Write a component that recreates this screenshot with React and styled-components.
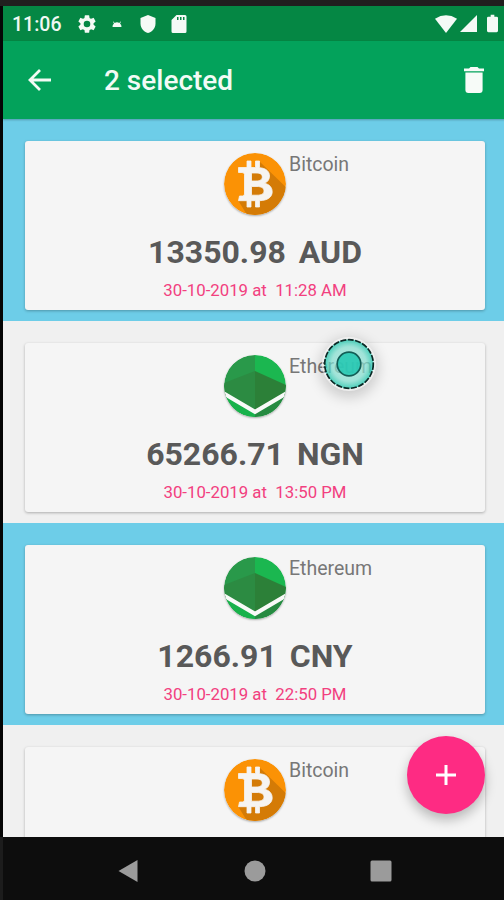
import React from "react";
import styled, { createGlobalStyle } from "styled-components";

const transactions = [
  { id: 1, coin: "Bitcoin", amount: "13350.98 AUD", date: "30-10-2019 at  11:28 AM", selected: true },
  { id: 2, coin: "Ethereum", amount: "65266.71 NGN", date: "30-10-2019 at  13:50 PM", selected: false },
  { id: 3, coin: "Ethereum", amount: "1266.91 CNY", date: "30-10-2019 at  22:50 PM", selected: true },
  { id: 4, coin: "Bitcoin", amount: "", date: "", selected: false },
];

function BitcoinLogo() {
  return (
    <Logo viewBox="0 0 62 62">
      <defs>
        <clipPath id="btcCircle">
          <circle cx="31" cy="31" r="31" />
        </clipPath>
      </defs>
      <circle cx="31" cy="31" r="31" fill="#fb9205" />
      <g clipPath="url(#btcCircle)">
        <path d="M36 9L70 42V70H28L14.500 48L23 44L25 18Z" fill="#d47b06" />
      </g>
      <path
        fill="#f6f4f1"
        fillRule="evenodd"
        stroke="#f6f4f1"
        strokeWidth="0.8"
        strokeLinejoin="round"
        d="M14.500 14.500H23V8H27V14.500H31.500V8H35.500V14.700C42 15.200 45.500 18.300 45.500 23C45.500 26.500 43.700 29 40.500 30.300C45.500 31.300 48.200 34.500 48.200 38.800C48.200 44.200 43.500 47.500 35.500 47.700V54H31.500V47.700H27V54H23V47.700H14.500L15.500 43H18.500Q20.500 43 20.500 41V21.500Q20.500 19.500 18 19.500H14.500ZM27.500 20V28H32C36 28 38.300 26.500 38.300 23.900C38.300 21.300 36.200 20 32 20ZM27.500 33.500V42.200H33C37.500 42.200 40 40.800 40 37.900C40 35 37.500 33.500 33 33.500Z"
      />
    </Logo>
  );
}

function EthereumLogo() {
  return (
    <Logo viewBox="0 0 62 62">
      <defs>
        <clipPath id="ethCircle">
          <circle cx="31" cy="31" r="31" />
        </clipPath>
      </defs>
      <g clipPath="url(#ethCircle)">
        <path d="M0 0H31V62H0Z" fill="#29994a" />
        <path d="M31 0H62V62H31Z" fill="#1bb750" />
        <path d="M0 28L31 16V58L0 40Z" fill="#2c8b42" />
        <path d="M62 30L31 16V58L62 40Z" fill="#2c8038" />
        <path d="M0 40L31 58V62H0Z" fill="#18b24b" />
        <path d="M62 40L31 58V62H62Z" fill="#268a41" />
        <path d="M-1 38L31 56.800L63 38" fill="none" stroke="#f8faf8" strokeWidth="4.200" />
      </g>
    </Logo>
  );
}

function TransactionRow({ coin, amount, date, selected }) {
  return (
    <Row $selected={selected}>
      <Card>
        <CoinLine>
          <span />
          {coin === "Bitcoin" ? <BitcoinLogo /> : <EthereumLogo />}
          <CoinName>{coin}</CoinName>
        </CoinLine>
        <Amount>{amount}</Amount>
        <DateText>{date}</DateText>
      </Card>
    </Row>
  );
}

function App() {
  return (
    <Device>
      <GlobalStyle />
      <Screen>
        <StatusBar>
          <Clock>11:06</Clock>
          <StatusIcon $width={22} $left={14} viewBox="0 0 24 24">
            <path d="M19.140 12.940c.04-.3.06-.61.06-.94s-.02-.64-.07-.94l2.030-1.580a.49.49 0 0 0 .12-.61l-1.920-3.320a.49.49 0 0 0-.59-.22l-2.390.96c-.5-.38-1.030-.7-1.620-.94l-.36-2.540a.48.48 0 0 0-.48-.41h-3.840a.47.47 0 0 0-.47.41l-.36 2.540c-.59.24-1.130.57-1.620.94l-2.390-.96a.48.48 0 0 0-.59.22L2.740 8.870a.47.47 0 0 0 .12.61l2.030 1.580c-.05.3-.09.63-.09.94s.02.64.07.94l-2.030 1.580a.49.49 0 0 0-.12.61l1.920 3.320c.12.22.37.29.59.22l2.390-.96c.5.38 1.030.7 1.620.94l.36 2.540c.05.24.24.41.48.41h3.840c.24 0 .44-.17.47-.41l.36-2.540c.59-.24 1.130-.56 1.620-.94l2.390.96c.22.08.47 0 .59-.22l1.920-3.320a.47.47 0 0 0-.12-.61zM12 15.600a3.600 3.600 0 1 1 0-7.200 3.600 3.600 0 0 1 0 7.200z" />
          </StatusIcon>
          <StatusIcon $width={10} $height={6} $left={14} viewBox="0 0 10 6">
            <path d="M.5 6a4.500 4.300 0 0 1 1.500-3.400L1 .8 1.500.4l1.200 1.500a5 5 0 0 1 4.600 0L8.500.4l.5.4-1 1.800A4.500 4.300 0 0 1 9.500 6z" />
          </StatusIcon>
          <StatusIcon $width={16} $height={18} $left={18} viewBox="0 0 16 18">
            <path d="M8 0l7.500 3v5.500c0 4.500-3.200 8.300-7.500 9.500C3.700 16.800.5 13 .5 8.500V3z" />
          </StatusIcon>
          <StatusIcon $width={16} $height={18} $left={15} viewBox="0 0 16 18">
            <path fillRule="evenodd" d="M5.500 0H14q1.500 0 1.500 1.500v15q0 1.500-1.500 1.500H2Q.5 18 .5 16.500V5zM6 2v3h1.500V2zM9 2v3h1.500V2zM12 2v3h1.500V2z" />
          </StatusIcon>
          <Spacer />
          <StatusIcon $width={22} $height={18} viewBox="0 0 22 18">
            <path d="M0 3.700Q11-3.200 22 3.700L11 18z" />
          </StatusIcon>
          <StatusIcon $width={17} $height={17} $left={3} viewBox="0 0 17 17">
            <path d="M17 0v17H0z" />
          </StatusIcon>
          <StatusIcon $width={11} $height={19} $left={10} viewBox="0 0 12 19">
            <path d="M4 0h4v2h2.500Q12 2 12 3.500v14q0 1.500-1.500 1.500h-9Q0 19 0 17.500v-14Q0 2 1.500 2H4z" />
          </StatusIcon>
        </StatusBar>

        <Toolbar>
          <BackIcon viewBox="0 0 24 22">
            <path d="M23 11H2M12 1L2 11l10 10" />
          </BackIcon>
          <Title>2 selected</Title>
          <Spacer />
          <TrashIcon viewBox="0 0 20 26">
            <path d="M0 1.500h5L6.500 0h7L15 1.500h5v2.700H0zM1.400 5.600h17.200V23q0 3-3 3H4.400q-3 0-3-3z" />
          </TrashIcon>
        </Toolbar>

        <List>
          {transactions.map((item) => (
            <TransactionRow key={item.id} {...item} />
          ))}
        </List>

        <NavBar>
          <NavIcon viewBox="0 0 24 26">
            <path d="M20.500 2v22L1.500 13z" />
          </NavIcon>
          <NavIcon viewBox="0 0 24 26">
            <circle cx="12" cy="13" r="10.500" />
          </NavIcon>
          <NavIcon viewBox="0 0 24 26">
            <rect x="1.500" y="2.500" width="21" height="21" rx="1.500" />
          </NavIcon>
        </NavBar>
      </Screen>

      <TouchPointer viewBox="0 0 52 52">
        <defs>
          <radialGradient id="ring">
            <stop offset="0.45" stopColor="#8fe0d3" stopOpacity="0.72" />
            <stop offset="0.7" stopColor="#7fdccd" stopOpacity="0.72" />
            <stop offset="1" stopColor="#1cc4aa" stopOpacity="0.8" />
          </radialGradient>
        </defs>
        <circle cx="26" cy="26" r="24.500" fill="url(#ring)" />
        <circle cx="26" cy="26" r="24.300" fill="none" stroke="#0b2825" strokeWidth="1.700" strokeDasharray="6 1.500" />
        <circle cx="26" cy="26" r="11.800" fill="#1fc7b0" fillOpacity="0.85" stroke="#125e56" strokeWidth="1.700" />
      </TouchPointer>
      <Fab>
        <svg width="22" height="22" viewBox="0 0 22 22">
          <path d="M11 1v20M1 11h20" stroke="#fff" strokeWidth="3" />
        </svg>
      </Fab>
    </Device>
  );
}

export default App;

const GlobalStyle = createGlobalStyle`
  * {
    box-sizing: border-box;
  }
  body {
    margin: 0;
    background: #000;
    font-family: Roboto, "Liberation Sans", sans-serif;
  }
`;
const Device = styled.div`
  position: relative;
  width: 504px;
  height: 900px;
  padding: 6px 0 0 3px;
  overflow: hidden;
  background: linear-gradient(#211f1f 6px, #050505 6px, #050505 837px, #1c1c1c 837px);
`;
const Screen = styled.div`
  width: 504px;
  height: 894px;
  display: flex;
  flex-direction: column;
`;
const StatusBar = styled.div`
  height: 35px;
  flex: none;
  display: flex;
  align-items: center;
  padding: 0 9px 0 9px;
  background: #058744;
`;
const Clock = styled.span`
  width: 50px;
  margin-top: 1px;
  color: #f1f8f3;
  font-size: 19.5px;
  font-weight: 500;
  white-space: nowrap;
`;
const StatusIcon = styled.svg`
  width: ${(props) => props.$width}px;
  height: ${(props) => props.$height || props.$width}px;
  margin-left: ${(props) => props.$left || 0}px;
  flex: none;
  fill: #f5faf6;
`;
const Spacer = styled.div`
  flex: 1;
`;
const Toolbar = styled.div`
  position: relative;
  z-index: 1;
  height: 78px;
  flex: none;
  display: flex;
  align-items: center;
  padding: 0 23px 0 25px;
  background: #03a25b;
  box-shadow: 0 1px 2px rgba(0, 0, 0, 0.25);
`;
const BackIcon = styled.svg`
  width: 24px;
  height: 22px;
  fill: none;
  stroke: #f2fbf5;
  stroke-width: 2.8;
`;
const Title = styled.h1`
  margin: 1px 0 0 52px;
  color: #f2fbf5;
  font-size: 28px;
  font-weight: 500;
  line-height: 34px;
`;
const TrashIcon = styled.svg`
  width: 20px;
  height: 26px;
  fill: #f7fbf8;
`;
const List = styled.div`
  flex: 1;
  min-height: 0;
  overflow: hidden;
`;
const Row = styled.div`
  height: 202px;
  padding: 22px 22px 11px;
  background: ${(props) => (props.$selected ? "#6dcde8" : "#f0f0f0")};
`;
const Card = styled.div`
  height: 169px;
  display: flex;
  flex-direction: column;
  align-items: center;
  padding-top: 12px;
  border-radius: 3px;
  background: #f5f5f5;
  box-shadow: 0 1px 3px rgba(0, 0, 0, 0.28);
`;
const CoinLine = styled.div`
  width: 100%;
  display: grid;
  grid-template-columns: 1fr 62px 1fr;
`;
const Logo = styled.svg`
  width: 62px;
  height: 62px;
  border-radius: 50%;
  box-shadow: 0 1px 2px rgba(0, 0, 0, 0.3);
`;
const CoinName = styled.span`
  padding-left: 3px;
  color: #777;
  font-size: 19.5px;
  line-height: 23px;
`;
const Amount = styled.div`
  margin-top: 17px;
  height: 40px;
  color: #595959;
  font-size: 32px;
  font-weight: 700;
  line-height: 40px;
  word-spacing: 5px;
  white-space: pre;
`;
const DateText = styled.div`
  margin-top: 8px;
  color: #f2407f;
  font-size: 16.8px;
  line-height: 20px;
  white-space: pre;
`;
const NavBar = styled.div`
  height: 63px;
  flex: none;
  display: flex;
  justify-content: center;
  align-items: center;
  gap: 102px;
  padding-top: 4px;
  background: #0d0d0d;
`;
const NavIcon = styled.svg`
  width: 24px;
  height: 26px;
  fill: #9b9b9b;
`;
const TouchPointer = styled.svg`
  position: absolute;
  left: 323px;
  top: 338px;
  width: 52px;
  height: 52px;
  border-radius: 50%;
  box-shadow: 0 0 0 1px rgba(245, 245, 245, 0.8), 0 4px 14px 3px rgba(0, 0, 0, 0.18);
`;
const Fab = styled.button`
  position: absolute;
  left: 407px;
  top: 736px;
  width: 78px;
  height: 78px;
  display: flex;
  justify-content: center;
  align-items: center;
  padding: 0;
  border: none;
  border-radius: 50%;
  background: #fe2b83;
  box-shadow: 0 6px 12px rgba(0, 0, 0, 0.25);
`;
